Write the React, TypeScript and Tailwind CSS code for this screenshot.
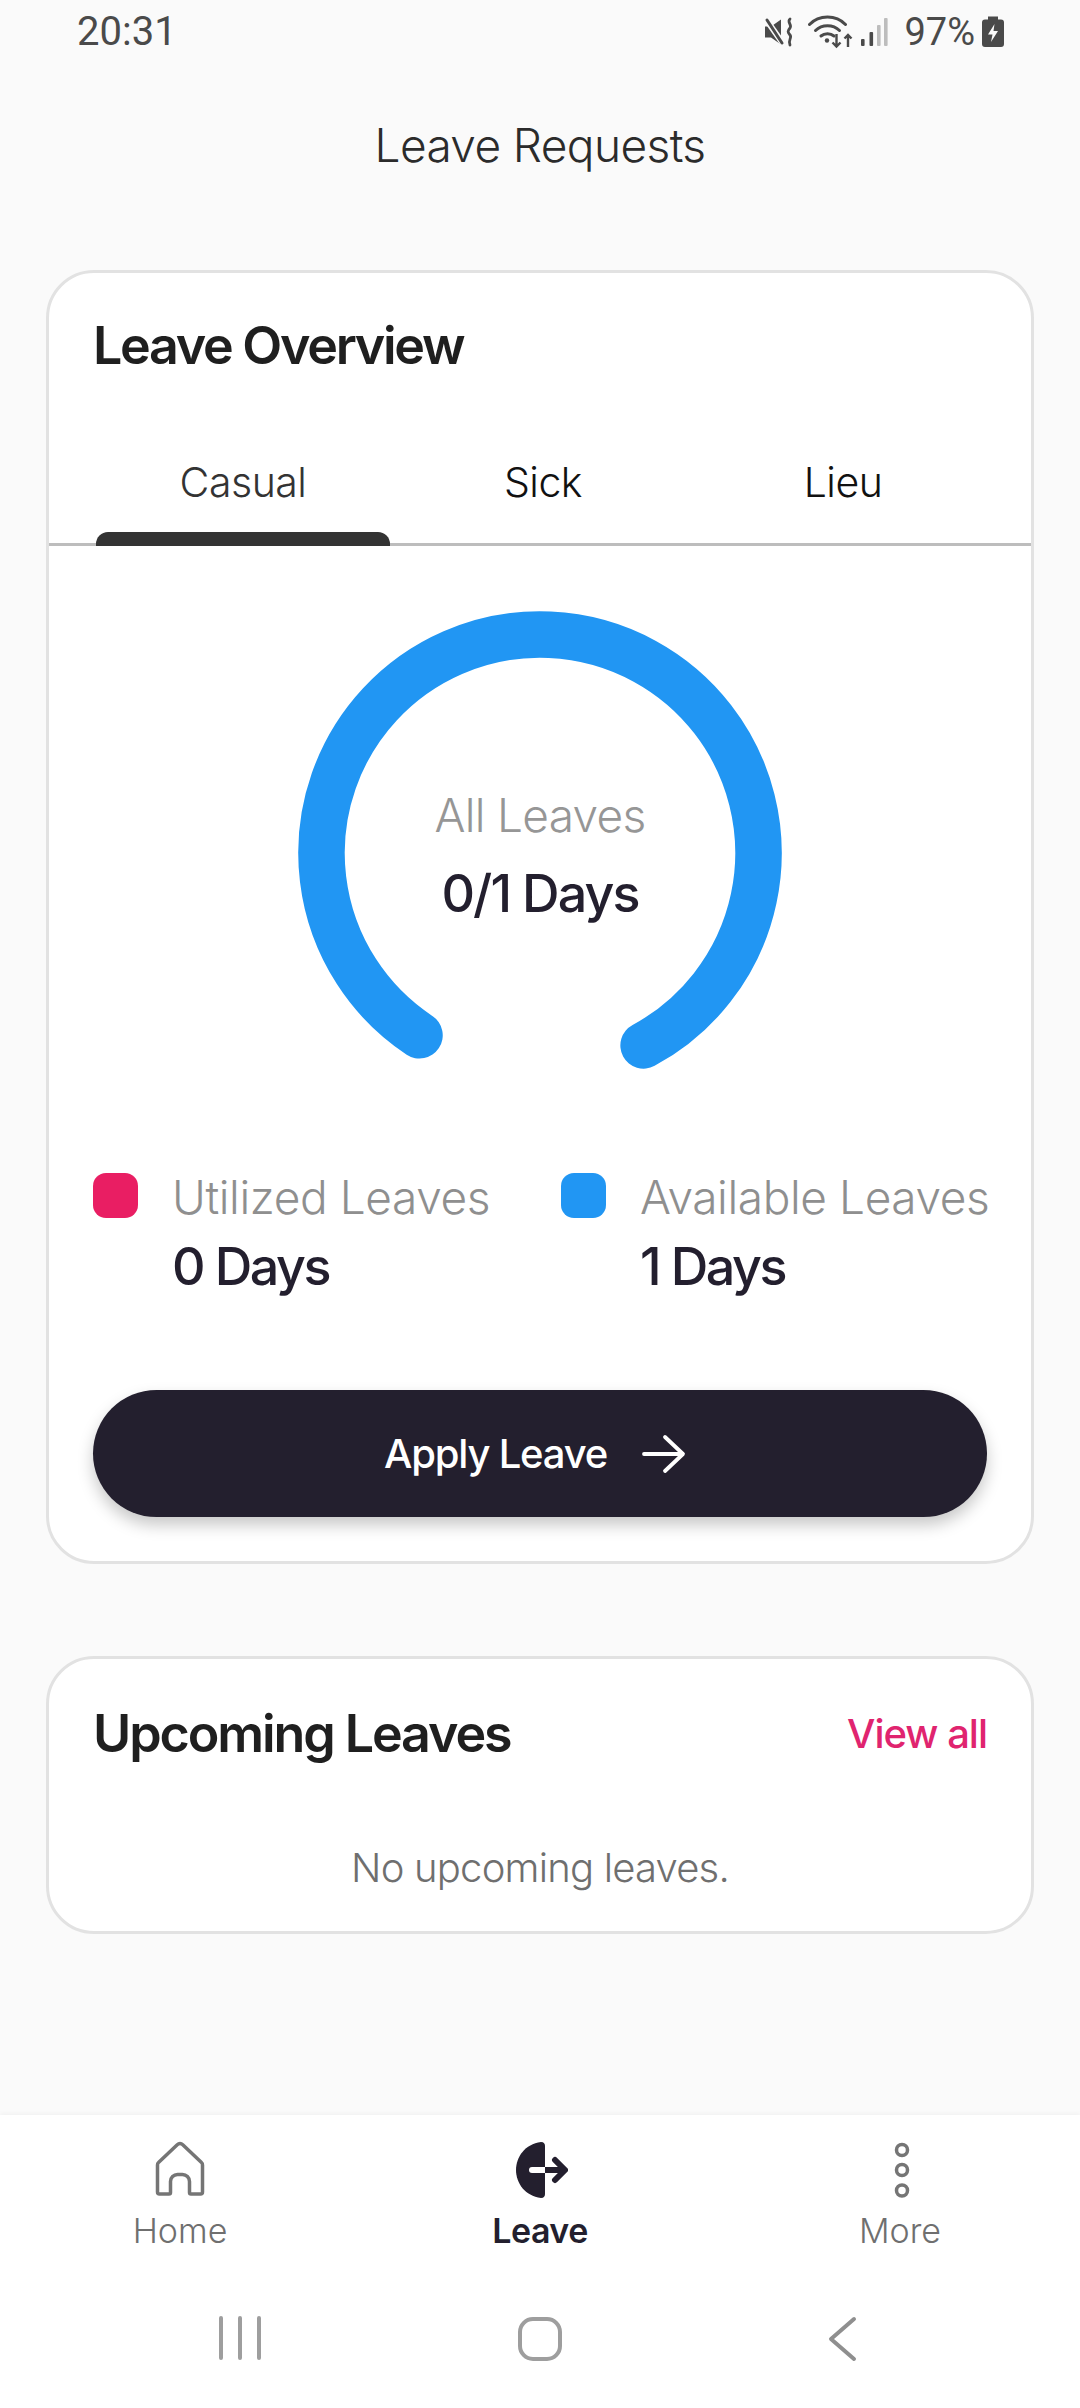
import React from "react";

function MuteIcon() {
  return (
    <svg width="30" height="30" viewBox="0 0 30 30" fill="none">
      <path d="M1 9.500h6L17 2.500v25L7 20.500H1z" fill="#4a4a4a" />
      <path d="M1 1l19 27" stroke="#fafafa" strokeWidth="6" />
      <path d="M3 3l15 23" stroke="#4a4a4a" strokeWidth="3" strokeLinecap="round" />
      <path d="M26 2c-3.500 3 2.500 6 0 9s-2.500 4 0 7-2.500 5 0 10" stroke="#4a4a4a" strokeWidth="2.800" strokeLinecap="round" />
    </svg>
  );
}

function WifiIcon() {
  return (
    <svg width="46" height="34" viewBox="0 0 46 34" fill="none">
      <path d="M1.500 9.500C11 -0.500 28 -0.500 37.500 9.500" stroke="#4a4a4a" strokeWidth="3" strokeLinecap="round" />
      <path d="M7.500 15.500C14 9 25 9 31.500 15.500" stroke="#4a4a4a" strokeWidth="3" strokeLinecap="round" />
      <path d="M13 21c3.500-3 9.500-3 13 0" stroke="#4a4a4a" strokeWidth="3" strokeLinecap="round" />
      <circle cx="19" cy="25.500" r="2.200" fill="#4a4a4a" />
      <path d="M28.500 19v12M24.500 27.500l4 4 4-4" stroke="#4a4a4a" strokeWidth="2.400" />
      <path d="M40 32V20M36.500 23.500l3.500-3.500 3.500 3.500" stroke="#4a4a4a" strokeWidth="2.400" />
    </svg>
  );
}

function SignalIcon() {
  return (
    <svg width="28" height="30" viewBox="0 0 28 30" fill="none">
      <rect x="1" y="22" width="3.600" height="7" rx="1" fill="#4a4a4a" />
      <rect x="9.500" y="15" width="3.600" height="14" rx="1" fill="#4a4a4a" />
      <rect x="17" y="8" width="3.600" height="21" rx="1" fill="#bdbdbd" />
      <rect x="24" y="1" width="3.600" height="28" rx="1" fill="#bdbdbd" />
    </svg>
  );
}

function BatteryIcon() {
  return (
    <svg width="22" height="32" viewBox="0 0 22 32" fill="none">
      <path d="M6 0.500h10v3h3a3 3 0 0 1 3 3V28a3 3 0 0 1-3 3H3a3 3 0 0 1-3-3V6.500a3 3 0 0 1 3-3h3z" fill="#4a4a4a" />
      <path d="M12.500 8L6 18.500h4.500L9 26l7-11h-4.500z" fill="#fafafa" />
    </svg>
  );
}

function HomeIcon() {
  return (
    <svg width="60" height="60" viewBox="0 0 60 60" fill="none">
      <path
        d="M8.500 22.500L27.500 4.500a3.500 3.500 0 0 1 5 0L51.500 22.500a3 3 0 0 1 1 2.500V52a2 2 0 0 1-2 2H41a1.500 1.500 0 0 1-1.500-1.500V41.500a7 7 0 0 0-7-7h-5a7 7 0 0 0-7 7v11a1.500 1.500 0 0 1-1.500 1.500H9.500a2 2 0 0 1-2-2V25a3 3 0 0 1 1-2.500z"
        stroke="#757575"
        strokeWidth="3.500"
        strokeLinejoin="round"
      />
    </svg>
  );
}

function LeaveIcon() {
  return (
    <svg width="60" height="60" viewBox="0 0 60 60" fill="none" className="mr-[4px]">
      <path d="M33 2C17 4 8 17 8 30c0 13 9 26 25 28 3 0 4-2 4-4V6c0-2-1-4-4-4z" fill="#231f2e" />
      <path d="M24 30h13" stroke="#ffffff" strokeWidth="6" strokeLinecap="round" />
      <path d="M37 30h17" stroke="#231f2e" strokeWidth="6" />
      <path d="M47 20l10 10-10 10" stroke="#231f2e" strokeWidth="6" strokeLinecap="round" strokeLinejoin="round" />
    </svg>
  );
}

function MoreIcon() {
  return (
    <svg width="60" height="60" viewBox="0 0 60 60" fill="none">
      <circle cx="32" cy="10" r="5.500" stroke="#757575" strokeWidth="3.500" />
      <circle cx="32" cy="30" r="5.500" stroke="#757575" strokeWidth="3.500" />
      <circle cx="32" cy="50.500" r="5.500" stroke="#757575" strokeWidth="3.500" />
    </svg>
  );
}

function Legend({ swatch, label, value, width }: { swatch: string; label: string; value: string; width: string }) {
  return (
    <div className={`flex gap-[34px] ${width}`}>
      <div className={`w-[45px] h-[45px] mt-[1px] shrink-0 rounded-[13px] ${swatch}`} />
      <div className="flex flex-col">
        <span className="text-[46px] leading-[50px] font-light text-[#8f8f8f] tracking-[-0.4px] whitespace-nowrap">{label}</span>
        <span className="mt-[15px] text-[52px] leading-[60px] font-medium text-[#231f2e] tracking-[-2.4px] whitespace-nowrap">{value}</span>
      </div>
    </div>
  );
}

function NavItem({ icon, label, active }: { icon: React.ReactNode; label: string; active?: boolean }) {
  return (
    <div className="flex flex-col items-center">
      {icon}
      <span className={active ? "mt-[9px] text-[34px] leading-[44px] font-semibold text-[#231f2e] tracking-[-0.5px]" : "mt-[9px] text-[34px] leading-[44px] font-light text-[#6f6f6f]"}>
        {label}
      </span>
    </div>
  );
}

export default function App() {
  return (
    <div className="w-[1080px] h-[2408px] flex flex-col bg-[#fafafa] font-['Inter',sans-serif] overflow-hidden">
      <div className="h-[64px] flex items-center justify-between pl-[77px] pr-[76px] font-['Roboto',sans-serif] text-[38px] font-normal text-[#4a4a4a]">
        <span className="text-[40px]">20:31</span>
        <div className="flex items-center">
          <MuteIcon />
          <div className="ml-[14px]"><WifiIcon /></div>
          <div className="ml-[6px]"><SignalIcon /></div>
          <span className="ml-[16px]">97%</span>
          <div className="ml-[7px]"><BatteryIcon /></div>
        </div>
      </div>

      <div className="h-[162px] flex items-center justify-center text-[46px] font-light text-[#2b2b2b] tracking-[-0.6px]">
        Leave Requests
      </div>

      <div className="mt-[44px] mx-[46px] border-[3px] border-[#e2e2e2] rounded-[48px] bg-white">
        <div className="pt-[42px] pl-[44px] text-[52px] leading-[62px] font-semibold text-[#1f1f1f] tracking-[-2.300px]">
          Leave Overview
        </div>
        <div className="mt-[71px] h-[98px] border-b-[3px] border-[#bdbdbd] pl-[44px] pr-[38px] grid grid-cols-3 text-[41px] leading-[68px] tracking-[-0.5px]">
          <div className="relative text-center font-light text-[#333333]">
            Casual
            <div className="absolute left-[3px] bottom-[-3px] w-[294px] h-[14px] rounded-t-[12px] bg-[#333333]" />
          </div>
          <div className="text-center font-light text-[#111111]">Sick</div>
          <div className="text-center font-light text-[#111111]">Lieu</div>
        </div>

        <div className="relative mt-[65px] mx-auto w-[484px] h-[460px]">
          <svg width="484" height="460" viewBox="0 0 484 460" fill="none">
            <path d="M121.500 424.300A218.500 218.500 0 1 1 345.600 434.400" stroke="#2196f3" strokeWidth="46.500" strokeLinecap="round" />
          </svg>
          <div className="absolute left-0 right-0 top-[179px] flex flex-col items-center">
            <span className="text-[46px] leading-[50px] font-light text-[#969696] tracking-[-0.7px]">All Leaves</span>
            <span className="mt-[24px] text-[52px] leading-[60px] font-medium text-[#231f2e] tracking-[-1.900px]">0/1 Days</span>
          </div>
        </div>

        <div className="mt-[101px] pl-[44px] flex">
          <Legend swatch="bg-[#e91e63]" label="Utilized Leaves" value="0 Days" width="w-[468px]" />
          <Legend swatch="bg-[#2196f3]" label="Available Leaves" value="1 Days" width="w-[420px]" />
        </div>

        <div className="mt-[93px] mb-[44px] mx-[44px] pr-[9px] h-[127px] rounded-full bg-[#231f2e] shadow-[0_8px_16px_rgba(0,0,0,0.22)] flex items-center justify-center gap-[34px] text-white">
          <span className="text-[40px] font-medium tracking-[-1.2px]">Apply Leave</span>
          <svg width="46" height="40" viewBox="0 0 46 40" fill="none">
            <path d="M3 20h38M24 3l18 17-18 17" stroke="#ffffff" strokeWidth="3.800" strokeLinecap="round" strokeLinejoin="round" />
          </svg>
        </div>
      </div>

      <div className="mt-[92px] mx-[46px] border-[3px] border-[#e2e2e2] rounded-[48px] bg-white px-[44px] pt-[44px] pb-[38px]">
        <div className="flex items-center justify-between">
          <span className="text-[52px] leading-[62px] font-semibold text-[#1f1f1f] tracking-[-2.100px]">Upcoming Leaves</span>
          <span className="text-[40px] leading-[62px] font-medium text-[#e0246f] tracking-[-1px]">View all</span>
        </div>
        <div className="mt-[78px] text-center text-[40px] leading-[50px] font-light text-[#6f6f6f] tracking-[-0.8px]">
          No upcoming leaves.
        </div>
      </div>

      <div className="mt-auto h-[293px] bg-white shadow-[0_-2px_4px_rgba(0,0,0,0.03)] pt-[25px]">
        <div className="grid grid-cols-3">
          <NavItem icon={<HomeIcon />} label="Home" />
          <NavItem icon={<LeaveIcon />} label="Leave" active />
          <NavItem icon={<MoreIcon />} label="More" />
        </div>
        <div className="mt-[63px] grid grid-cols-[300px_300px_300px] justify-center justify-items-center">
          <svg width="44" height="44" viewBox="0 0 44 44" fill="none">
            <path d="M3 2v40M22 2v40M41 2v40" stroke="#9e9e9e" strokeWidth="4" strokeLinecap="round" />
          </svg>
          <svg width="46" height="46" viewBox="0 0 46 46" fill="none">
            <rect x="3" y="3" width="40" height="40" rx="13" stroke="#9e9e9e" strokeWidth="4" />
          </svg>
          <svg width="44" height="46" viewBox="0 0 44 46" fill="none" className="ml-[6px]">
            <path d="M33 3L10 23l23 20" stroke="#8f8f8f" strokeWidth="4" strokeLinecap="round" strokeLinejoin="round" />
          </svg>
        </div>
      </div>
    </div>
  );
}
